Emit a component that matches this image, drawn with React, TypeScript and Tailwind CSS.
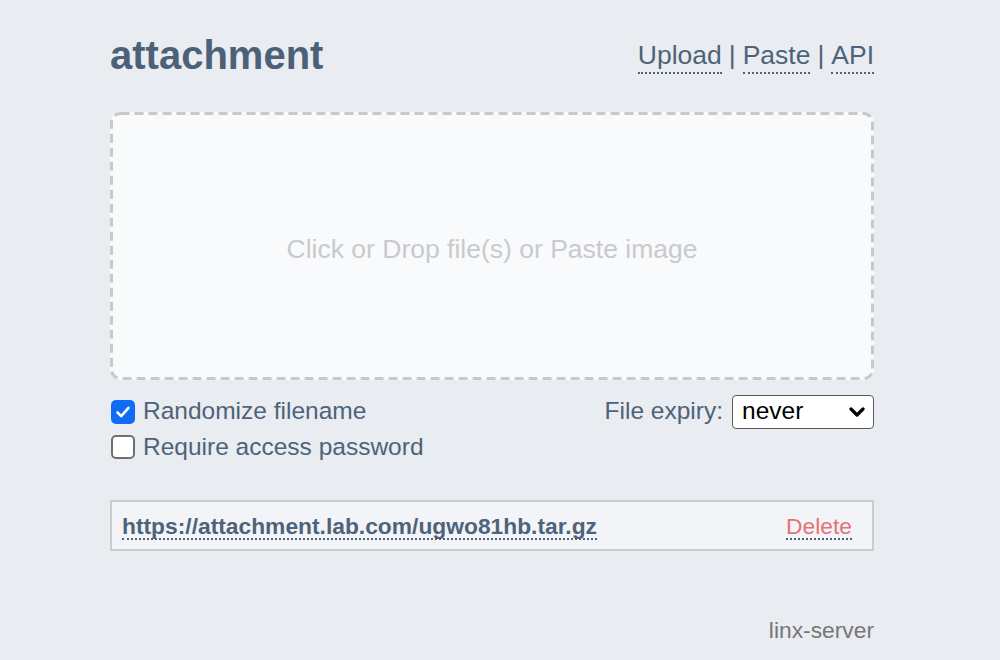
import React from "react"

const font = { fontFamily: '"Liberation Sans", Arial, Helvetica, sans-serif' }

function Check({ checked }: { checked: boolean }) {
  if (checked) {
    return (
      <span className="flex h-[24px] w-[24px] shrink-0 items-center justify-center rounded-[5px] bg-[#0f6cf5]">
        <svg width="16" height="16" viewBox="0 0 16 16" fill="none">
          <path d="M2.5 8.5 L6.2 12.2 L13.5 3.8" stroke="white" strokeWidth="2.6" strokeLinecap="round" strokeLinejoin="round" />
        </svg>
      </span>
    )
  }
  return <span className="h-[24px] w-[24px] shrink-0 rounded-[5px] border-2 border-[#6f6f6f] bg-white" />
}

export default function App() {
  return (
    <div className="min-h-[660px] w-full bg-[#e9ecf0] text-[#4e6379]" style={font}>
      <div className="ml-[110px] flex w-[764px] flex-col pt-[30px]">
        {/* Header */}
        <div className="flex h-[50px] items-center justify-between">
          <h1 className="text-[40px] font-bold leading-none text-[#4c6178]">attachment</h1>
          <div className="flex items-center gap-[7px] pt-[6px] text-[26.5px] leading-none">
            <span className="border-b-2 border-dotted border-[#4e6379] pb-[3px]">Upload</span>
            <span className="pb-[5px]">|</span>
            <span className="border-b-2 border-dotted border-[#4e6379] pb-[3px]">Paste</span>
            <span className="pb-[5px]">|</span>
            <span className="border-b-2 border-dotted border-[#4e6379] pb-[3px]">API</span>
          </div>
        </div>

        {/* Drop zone */}
        <div className="relative mt-[32px] flex h-[268px] items-center justify-center rounded-[10px] bg-[#f9fafb] pt-[8px]">
          <svg className="pointer-events-none absolute inset-0" width="764" height="268">
            <rect x="1.5" y="1.5" width="761" height="265" rx="9" ry="9" fill="none" stroke="#c9c9c9" strokeWidth="3" strokeDasharray="9 5" />
          </svg>
          <span className="text-[26.5px] text-[#c8cacd]">Click or Drop file(s) or Paste image</span>
        </div>

        {/* Options */}
        <div className="mt-[15px] flex flex-col gap-[4px]">
          <div className="flex h-[33px] items-center justify-between">
            <label className="flex items-center gap-[8px] pl-[1px] text-[24.5px]">
              <Check checked />
              <span>Randomize filename</span>
            </label>
            <div className="flex items-center gap-[9px] text-[24.5px]">
              <span>File expiry:</span>
              <div className="flex h-[34px] w-[142px] items-center justify-between rounded-[4px] border border-[#5a5a5a] bg-white pl-[9px] pr-[8px] text-black">
                <span className="text-[24.5px] leading-none">never</span>
                <svg width="16" height="12" viewBox="0 0 16 12" fill="none">
                  <path d="M2 3 L8 9 L14 3" stroke="black" strokeWidth="3.2" strokeLinecap="round" strokeLinejoin="round" />
                </svg>
              </div>
            </div>
          </div>
          <div className="flex h-[30px] items-center">
            <label className="flex items-center gap-[8px] pl-[1px] text-[24.5px]">
              <Check checked={false} />
              <span>Require access password</span>
            </label>
          </div>
        </div>

        {/* Result */}
        <div className="mt-[38px] flex h-[51px] items-center justify-between border-2 border-[#c9cbce] bg-[#f2f4f7] pl-[10px] pr-[20px]">
          <span className="border-b-2 border-dotted border-[#4e6379] pt-[4px] text-[22.8px] font-bold leading-none">
            https://attachment.lab.com/ugwo81hb.tar.gz
          </span>
          <span className="border-b-2 border-dotted border-[#4e6379] pt-[4px] text-[22.8px] leading-none text-[#e47474]">
            Delete
          </span>
        </div>

        {/* Footer */}
        <div className="mt-[66px] flex justify-end">
          <span className="text-[22.8px] leading-[26px] text-[#777777]">linx-server</span>
        </div>
      </div>
    </div>
  )
}
